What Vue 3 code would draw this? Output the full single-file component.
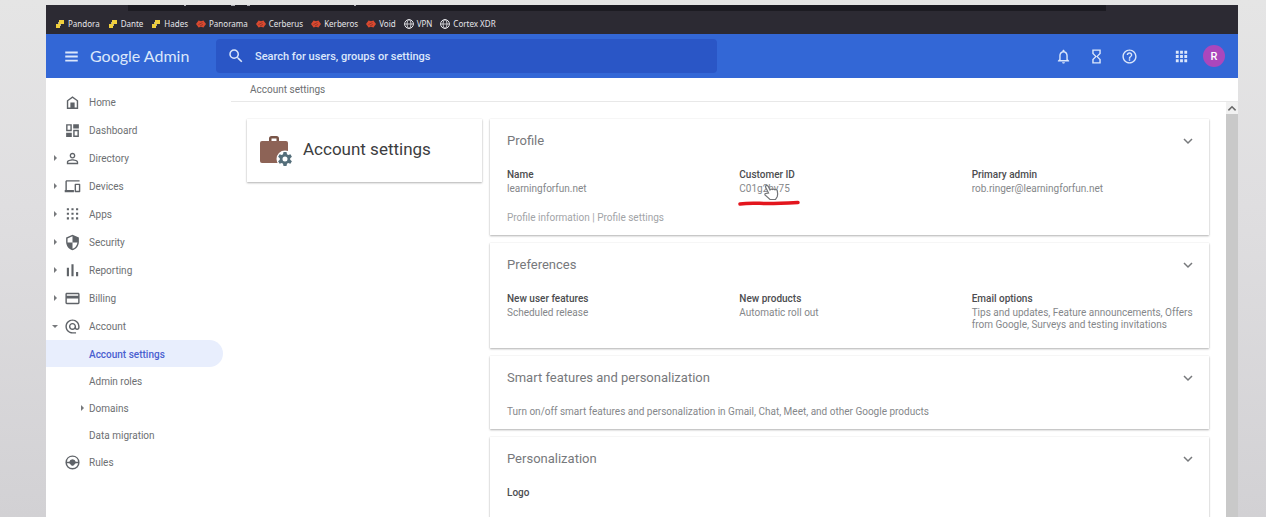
<template>
  <div class="desktop">
    <div class="window">
      <div class="chrome">
        <div class="address-strip">
          <svg class="address-marks" viewBox="0 0 200 2" aria-hidden="true">
            <path d="M56 0h2v1h-2zM103 0h4v1h-4zM119 0h3v1h-3zM226 0h2v1h-2z" />
          </svg>
        </div>
        <nav class="bookmarks" aria-label="Bookmarks">
          <a v-for="mark in bookmarks" :key="mark.name" href="#" @click.prevent>
            <svg v-if="mark.icon === 'blocks'" viewBox="0 0 10 10">
              <path fill="#b9b089" d="M3 3h3v4H3z" />
              <path fill="#f0cf3c" d="M4 1h5v4H4zM1 5h4v4H1z" />
            </svg>
            <svg v-else-if="mark.icon === 'palo'" viewBox="0 0 10 10">
              <path fill="#d9492f" d="M2.500 1.500L5 2.200l2.500-.7 1 1.500L10 5 8.500 7l-1 1.500L5 7.800l-2.500.7-1-1.500L0 5l1.500-2z" />
              <path stroke="#7d2d26" stroke-width=".7" d="M2.500 5.500l4-2M4 7l3-1.500" />
            </svg>
            <svg v-else viewBox="0 0 10 10" fill="none" stroke="#e8e8ec">
              <circle cx="5" cy="5" r="4.400" />
              <ellipse cx="5" cy="5" rx="2" ry="4.400" stroke-width=".8" />
              <path d="M.6 5h8.800" stroke-width=".8" />
            </svg>
            <span>{{ mark.name }}</span>
          </a>
        </nav>
      </div>

      <header class="topbar">
        <button class="icon-btn menu-btn" aria-label="Main menu" @click="menuOpen = !menuOpen">
          <svg viewBox="0 0 24 24"><path d="M2 4h20v3H2zM2 10.500h20v3H2zM2 17h20v3H2z" /></svg>
        </button>
        <a href="#" class="brand" @click.prevent>Google Admin</a>
        <label class="search">
          <svg viewBox="0 0 24 24"><path :d="icons.search" /></svg>
          <input v-model="query" type="text" aria-label="Search" placeholder="Search for users, groups or settings" />
        </label>
        <div class="tools">
          <button class="icon-btn" aria-label="Notifications"><svg viewBox="0 0 24 24"><path :d="icons.bell" /></svg></button>
          <button class="icon-btn" aria-label="Tasks"><svg viewBox="0 0 24 24"><path :d="icons.hourglass" /></svg></button>
          <button class="icon-btn" aria-label="Help"><svg viewBox="0 0 24 24"><path :d="icons.help" /></svg></button>
          <button class="icon-btn apps-btn" aria-label="Google apps"><svg viewBox="0 0 24 24"><path :d="icons.apps" /></svg></button>
          <button class="avatar" aria-label="Account">R</button>
        </div>
      </header>

      <div class="body">
        <nav v-show="menuOpen" class="sidebar" aria-label="Main">
          <a
            v-for="item in navItems"
            :key="item.label"
            href="#"
            class="nav-item"
            :class="{ sub: item.sub, active: item.label === current }"
            @click.prevent="current = item.label"
          >
            <span class="arrow" :class="item.arrow"></span>
            <svg v-if="item.icon" class="nav-icon" viewBox="0 0 24 24">
              <path :d="icons[item.icon]" fill-rule="evenodd" />
            </svg>
            <span class="nav-label">{{ item.label }}</span>
          </a>
        </nav>

        <main class="main">
          <div class="breadcrumb">Account settings</div>
          <div class="scroll-area">
            <div class="content">
              <section class="summary card">
                <svg class="summary-icon" viewBox="0 0 32 32">
                  <path fill="#795548" d="M9 7V3.500Q9 1 11.500 1h5Q19 1 19 3.500V7h-2.500V3.500h-5V7z" />
                  <path fill="#8d6356" d="M2 6h24q2 0 2 2v18q0 2-2 2H2q-2 0-2-2V8q0-2 2-2z" />
                  <circle cx="25" cy="24" r="8.500" fill="#fff" />
                  <path
                    fill="#546e7a"
                    fill-rule="evenodd"
                    d="M23.500 17h3l.5 2.200 1.200.7 2.200-.7 1.500 2.600-1.700 1.500v1.400l1.700 1.500-1.500 2.600-2.200-.7-1.200.7-.5 2.200h-3l-.5-2.200-1.200-.7-2.200.7-1.500-2.600 1.700-1.500v-1.400l-1.700-1.500 1.500-2.600 2.200.7 1.200-.7zM25 21.500a2.500 2.500 0 1 0 0 5 2.500 2.500 0 0 0 0-5z"
                  />
                </svg>
                <h1>Account settings</h1>
              </section>

              <div class="cards">
                <section v-for="card in cards" :key="card.title" class="card panel">
                  <div class="panel-head">
                    <h2>{{ card.title }}</h2>
                    <button class="expand" :aria-label="'Expand ' + card.title">
                      <svg viewBox="0 0 10 10"><path d="M1 3l4 4 4-4" /></svg>
                    </button>
                  </div>
                  <dl v-if="card.fields" class="fields">
                    <div v-for="field in card.fields" :key="field.label" class="field">
                      <dt>{{ field.label }}</dt>
                      <dd>{{ field.value }}</dd>
                      <template v-if="field.marked">
                        <svg class="underline" viewBox="0 0 62 6">
                          <path d="M2 4C12 2.500 20 3.500 30 3.500S50 3 60 2.500" />
                        </svg>
                        <svg class="pointer" viewBox="0 0 16 18">
                          <path d="M5.500 10L2.500 4Q2.300 2.500 3.500 2.300 4.700 2.300 5.300 3.500L7 7Q8 5.500 9.500 6.500q1.500-1 2.500.3 2-.6 2.300 1.200.7 3 0 5.500L12.500 16.500H7L2 12Q1.500 10.300 3 10.300z" />
                        </svg>
                      </template>
                    </div>
                  </dl>
                  <p v-if="card.text" class="text">{{ card.text }}</p>
                  <p v-if="card.links" class="links">
                    <template v-for="(link, i) in card.links" :key="link">
                      <span v-if="i"> | </span><a href="#" @click.prevent>{{ link }}</a>
                    </template>
                  </p>
                </section>
              </div>
            </div>
            <div class="scrollbar">
              <button aria-label="Scroll up">
                <svg viewBox="0 0 10 10"><path d="M2 7l3-3 3 3" /></svg>
              </button>
              <div class="thumb"></div>
            </div>
          </div>
        </main>
      </div>
    </div>
  </div>
</template>

<script setup>
import { ref } from 'vue';

const query = ref('');
const menuOpen = ref(true);
const current = ref('Account settings');

const bookmarks = [
  { name: 'Pandora', icon: 'blocks' },
  { name: 'Dante', icon: 'blocks' },
  { name: 'Hades', icon: 'blocks' },
  { name: 'Panorama', icon: 'palo' },
  { name: 'Cerberus', icon: 'palo' },
  { name: 'Kerberos', icon: 'palo' },
  { name: 'Void', icon: 'palo' },
  { name: 'VPN', icon: 'globe' },
  { name: 'Cortex XDR', icon: 'globe' },
];

const navItems = [
  { label: 'Home', icon: 'home' },
  { label: 'Dashboard', icon: 'dashboard' },
  { label: 'Directory', icon: 'person', arrow: 'right' },
  { label: 'Devices', icon: 'devices', arrow: 'right' },
  { label: 'Apps', icon: 'dots', arrow: 'right' },
  { label: 'Security', icon: 'shield', arrow: 'right' },
  { label: 'Reporting', icon: 'chart', arrow: 'right' },
  { label: 'Billing', icon: 'billing', arrow: 'right' },
  { label: 'Account', icon: 'at', arrow: 'down' },
  { label: 'Account settings', sub: true },
  { label: 'Admin roles', sub: true },
  { label: 'Domains', sub: true, arrow: 'right' },
  { label: 'Data migration', sub: true },
  { label: 'Rules', icon: 'rules' },
];

const cards = [
  {
    title: 'Profile',
    fields: [
      { label: 'Name', value: 'learningforfun.net' },
      { label: 'Customer ID', value: 'C01g2hy75', marked: true },
      { label: 'Primary admin', value: 'rob.ringer@learningforfun.net' },
    ],
    links: ['Profile information', 'Profile settings'],
  },
  {
    title: 'Preferences',
    fields: [
      { label: 'New user features', value: 'Scheduled release' },
      { label: 'New products', value: 'Automatic roll out' },
      {
        label: 'Email options',
        value: 'Tips and updates, Feature announcements, Offers from Google, Surveys and testing invitations',
      },
    ],
  },
  {
    title: 'Smart features and personalization',
    text: 'Turn on/off smart features and personalization in Gmail, Chat, Meet, and other Google products',
  },
  {
    title: 'Personalization',
    fields: [{ label: 'Logo', value: '' }],
  },
];

const icons = {
  search:
    'M15.500 14h-.79l-.28-.27A6.470 6.470 0 0 0 16 9.500 6.500 6.500 0 1 0 9.500 16c1.610 0 3.090-.59 4.230-1.570l.27.28v.79l5 4.990L20.490 19l-4.990-5zm-6 0C7.010 14 5 11.990 5 9.500S7.010 5 9.500 5 14 7.010 14 9.500 11.990 14 9.500 14z',
  bell: 'M12 22c1.100 0 2-.9 2-2h-4c0 1.100.9 2 2 2zm6-6v-5c0-3.070-1.630-5.640-4.500-6.320V4c0-.83-.67-1.500-1.500-1.500s-1.500.67-1.500 1.500v.68C7.640 5.360 6 7.920 6 11v5l-2 2v1h16v-1l-2-2zm-2 1H8v-6c0-2.480 1.510-4.500 4-4.500s4 2.020 4 4.500v6z',
  hourglass:
    'M6 2v6h.01L6 8.010 10 12l-4 4 .01.01H6V22h12v-5.990h-.01L18 16l-4-4 4-3.990-.01-.01H18V2H6zm10 14.500V20H8v-3.500l4-4 4 4zm-4-5l-4-4V4h8v3.500l-4 4z',
  help: 'M11 18h2v-2h-2v2zm1-16C6.480 2 2 6.480 2 12s4.480 10 10 10 10-4.480 10-10S17.520 2 12 2zm0 18c-4.410 0-8-3.590-8-8s3.590-8 8-8 8 3.590 8 8-3.590 8-8 8zm0-14c-2.210 0-4 1.790-4 4h2c0-1.100.9-2 2-2s2 .9 2 2c0 2-3 1.750-3 5h2c0-2.250 3-2.500 3-5 0-2.210-1.790-4-4-4z',
  apps: 'M4 4h4v4H4zM10 4h4v4h-4zM16 4h4v4h-4zM4 10h4v4H4zM10 10h4v4h-4zM16 10h4v4h-4zM4 16h4v4H4zM10 16h4v4h-4zM16 16h4v4h-4z',
  dots: 'M4 3h3v3H4zM10.500 3h3v3h-3zM17 3h3v3h-3zM4 9.500h3v3H4zM10.500 9.500h3v3h-3zM17 9.500h3v3h-3zM4 16h3v3H4zM10.500 16h3v3h-3zM17 16h3v3h-3z',
  home: 'M12 3L4 9v12h16V9l-8-6zm6 16H6v-9l6-4.500 6 4.500v9zM9 12h6v7H9z',
  dashboard:
    'M3 3h8v10H3zM5 5v6h4V5zM13 3h8v6h-8zM3 15h8v6H3zM13 11h8v10h-8zM15 13v6h4v-6z',
  person:
    'M12 5.900a2.100 2.100 0 1 1 0 4.200 2.100 2.100 0 0 1 0-4.200zm0 9c2.970 0 6.100 1.460 6.100 2.100v1.100H5.900V17c0-.64 3.130-2.100 6.100-2.100zM12 4C9.790 4 8 5.790 8 8s1.790 4 4 4 4-1.790 4-4-1.790-4-4-4zm0 9c-2.670 0-8 1.340-8 4v3h16v-3c0-2.660-5.330-4-8-4z',
  devices:
    'M4 5h18V3H4c-1.100 0-2 .9-2 2v12H1v3h13v-3H4V5zm18 3h-6c-.55 0-1 .45-1 1v10c0 .55.45 1 1 1h6c.55 0 1-.45 1-1V9c0-.55-.45-1-1-1zm-1 10h-4v-8h4v8z',
  shield:
    'M12 1L3 5v6c0 5.550 3.840 10.740 9 12 5.160-1.260 9-6.450 9-12V5l-9-4zM12 3.200L5 6.300V12h7zM12 12h7c-.53 4.120-3.280 7.790-7 8.940z',
  chart: 'M4 8h3v12H4zM10.500 3h3v17h-3zM17 14h3v6h-3z',
  billing:
    'M20 4H4c-1.110 0-2 .89-2 2v12c0 1.110.89 2 2 2h16c1.110 0 2-.89 2-2V6c0-1.110-.89-2-2-2zm0 14H4v-6h16v6zm0-10H4V6h16v2z',
  at: 'M12 1.950C6.480 1.950 2 6.430 2 11.950s4.480 10 10 10h5v-2h-5c-4.340 0-8-3.660-8-8s3.660-8 8-8 8 3.660 8 8v1.430c0 .79-.71 1.570-1.500 1.570s-1.500-.78-1.500-1.570v-1.430c0-2.760-2.240-5-5-5s-5 2.240-5 5 2.240 5 5 5c1.380 0 2.640-.56 3.540-1.470.65.89 1.770 1.470 2.960 1.470 1.970 0 3.500-1.600 3.500-3.570v-1.430c0-5.520-4.480-10-10-10zm0 13c-1.660 0-3-1.340-3-3s1.340-3 3-3 3 1.340 3 3-1.340 3-3 3z',
  rules:
    'M12 2a10 10 0 1 0 0 20 10 10 0 0 0 0-20zM12 4a8 8 0 0 1 7.900 7H16.500a4.600 4.600 0 0 0-9 0H4.100A8 8 0 0 1 12 4zM4.100 13H7.500L11 16.500h2L16.500 13h3.400A8 8 0 0 1 4.100 13z',
};
</script>

<style>
body {
  margin: 0;
}
</style>

<style scoped>
.desktop {
  display: flex;
  box-sizing: border-box;
  height: 100vh;
  padding: 5px 28px 0 46px;
  overflow: hidden;
  background: linear-gradient(#e5e5e5, #dfdee0 40%, #d2d1d4);
  font-family: Roboto, "Liberation Sans", sans-serif;
  font-size: 10px;
  line-height: 12px;
  color: #6d6f72;
}

.window {
  display: flex;
  flex: 1;
  flex-direction: column;
  min-width: 0;
  background: #fff;
}

a {
  color: inherit;
  text-decoration: none;
}

button {
  padding: 0;
  border: 0;
  background: none;
  font-family: inherit;
  cursor: pointer;
}

.chrome {
  background: #2c2a33;
}

.address-strip {
  height: 6px;
  margin: 0 132px 0 82px;
  background: #1c1b22;
}

.address-marks {
  display: block;
  width: 200px;
  height: 2px;
  overflow: visible;
  fill: #a9a9b0;
}

.bookmarks {
  display: flex;
  align-items: center;
  gap: 8px;
  box-sizing: border-box;
  height: 23px;
  padding: 2px 0 0 9px;
  color: #e6e6ea;
  font-family: "Noto Sans", sans-serif;
  font-size: 8px;
}

.bookmarks a {
  display: flex;
  align-items: center;
  gap: 3px;
}

.bookmarks svg {
  width: 10px;
  height: 10px;
}

.topbar {
  display: flex;
  align-items: center;
  height: 44px;
  padding: 0 13px 0 14px;
  background: #3367d6;
}

.icon-btn {
  display: flex;
  align-items: center;
  justify-content: center;
  width: 22px;
  height: 22px;
}

.icon-btn svg {
  width: 17px;
  height: 17px;
  fill: #dce7fb;
}

.menu-btn svg {
  width: 15px;
  height: 15px;
}

.brand {
  width: 118px;
  margin-left: 8px;
  color: #dce7fb;
  font-family: Lato, sans-serif;
  font-size: 16px;
  line-height: 22px;
}

.search {
  display: flex;
  flex: 0 1 501px;
  align-items: center;
  box-sizing: border-box;
  height: 34px;
  margin-left: 8px;
  padding: 0 11px;
  border-radius: 4px;
  background: #2a56c6;
}

.search svg {
  flex: none;
  width: 18px;
  height: 18px;
  fill: #dce7fb;
}

.search input {
  flex: 1;
  min-width: 0;
  margin-left: 10px;
  padding: 0;
  border: 0;
  outline: 0;
  background: none;
  color: #fff;
  font-family: inherit;
  font-size: 11px;
  font-weight: 500;
}

.search input::placeholder {
  color: #dce7fb;
  opacity: 1;
}

.tools {
  display: flex;
  align-items: center;
  gap: 11px;
  margin-left: auto;
}

.apps-btn {
  margin-left: 19px;
}

.avatar {
  width: 22px;
  height: 22px;
  border-radius: 50%;
  background: #ab47bc;
  color: #fff;
  font-size: 11px;
  font-weight: 500;
}

.body {
  display: flex;
  flex: 1;
  min-height: 0;
}

.sidebar {
  flex: 0 0 185px;
  padding-top: 10px;
}

.nav-item {
  display: flex;
  align-items: center;
  height: 28px;
  margin-right: 8px;
  border-radius: 0 14px 14px 0;
}

.nav-item.sub {
  height: 27px;
}

.nav-item.active {
  background: #e8eefd;
  color: #4a5fd0;
  font-weight: 500;
}

.arrow {
  width: 18px;
  height: 6px;
}

.arrow::before {
  content: "";
  display: block;
  width: 0;
  margin-left: 8px;
}

.arrow.right::before {
  border: 3px solid transparent;
  border-left: 3px solid #77797c;
  border-right: 0;
}

.arrow.down::before {
  margin: 2px 0 0 6px;
  border: 3px solid transparent;
  border-top: 3px solid #77797c;
  border-bottom: 0;
}

.sub .arrow {
  width: 43px;
}

.sub .arrow.right::before {
  margin-left: 35px;
}

.nav-icon {
  width: 17px;
  height: 17px;
  margin-right: 8px;
  fill: #5f6368;
}

.nav-label {
  padding-top: 2px;
}

.main {
  display: flex;
  flex: 1;
  flex-direction: column;
  min-width: 0;
}

.breadcrumb {
  padding: 6px 19px 5px;
  border-bottom: 1px solid #e8e8e8;
}

.scroll-area {
  display: flex;
  flex: 1;
  min-height: 0;
}

.content {
  display: flex;
  flex: 1;
  align-items: flex-start;
  gap: 8px;
  padding: 17px 17px 0 16px;
  overflow: hidden;
}

.card {
  background: #fff;
  box-shadow: 0 1px 2px rgba(0, 0, 0, 0.3), 0 0 1px rgba(0, 0, 0, 0.1);
}

.summary {
  display: flex;
  flex: 0 0 235px;
  align-items: center;
  box-sizing: border-box;
  height: 63px;
  padding: 0 13px;
}

.summary-icon {
  width: 32px;
  height: 32px;
}

h1,
h2,
p,
dl,
dd {
  margin: 0;
}

h1 {
  margin-left: 11px;
  padding-bottom: 4px;
  color: #3c3d40;
  font-size: 17px;
  font-weight: 400;
  line-height: 22px;
}

.cards {
  display: flex;
  flex: 1;
  flex-direction: column;
  gap: 8px;
  min-width: 0;
}

.panel {
  padding: 14px 16px 11px 17px;
}

.panel-head {
  display: flex;
  align-items: center;
  justify-content: space-between;
  margin-bottom: 20px;
}

h2 {
  color: #77797c;
  font-size: 13px;
  font-weight: 400;
  line-height: 16px;
}

.expand {
  width: 10px;
  height: 10px;
}

.expand svg {
  display: block;
  fill: none;
  stroke: #77797c;
  stroke-width: 1.500;
}

.fields {
  display: grid;
  grid-template-columns: repeat(3, 1fr);
  gap: 11px;
  margin-bottom: 6px;
}

.field {
  position: relative;
}

dt {
  margin-bottom: 2px;
  color: #4c4d50;
  font-weight: 500;
}

dd,
.text {
  color: #85878a;
}

.links {
  margin-top: 17px;
  color: #a2a4a7;
}

.underline {
  position: absolute;
  top: 31px;
  left: -1px;
  width: 62px;
  height: 6px;
  fill: none;
  stroke: #e3151d;
  stroke-width: 3.500;
  stroke-linecap: round;
}

.pointer {
  position: absolute;
  top: 14px;
  left: 24px;
  width: 16px;
  height: 18px;
  fill: #fff;
  stroke: #737578;
  stroke-width: 1.200;
}

.scrollbar {
  display: flex;
  flex: 0 0 12px;
  flex-direction: column;
  background: #f1f1f1;
}

.scrollbar button {
  height: 12px;
}

.scrollbar svg {
  display: block;
  width: 12px;
  height: 12px;
  fill: none;
  stroke: #6a6a6a;
  stroke-width: 1.300;
}

.thumb {
  flex: 1;
  background: #c9c9c9;
}
</style>
